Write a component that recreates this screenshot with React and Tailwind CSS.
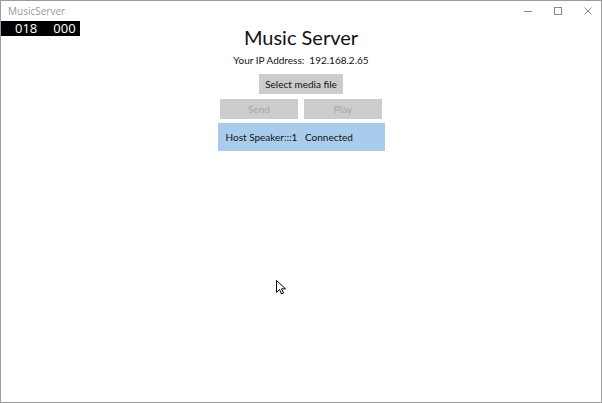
import React from 'react';

const font = { fontFamily: 'Lato, "Open Sans", "Liberation Sans", sans-serif' };

const TitleBar = () => (
  <div className="flex h-[20px] items-center justify-between">
    <span className="pl-[7px] text-[10px] text-[#9a9a9a]" style={{ fontFamily: '"Open Sans", sans-serif' }}>MusicServer</span>
    <div className="flex items-center gap-[22px] pr-[9px] text-[#8a8a8a]">
      <svg width="8" height="8" viewBox="0 0 8 8"><path d="M0 4.5h8" stroke="currentColor" strokeWidth="1" /></svg>
      <svg width="8" height="8" viewBox="0 0 8 8"><rect x="0.5" y="0.5" width="7" height="7" fill="none" stroke="currentColor" strokeWidth="1" /></svg>
      <svg width="8" height="8" viewBox="0 0 8 8"><path d="M0.5 0.5l7 7M7.5 0.5l-7 7" stroke="currentColor" strokeWidth="1" /></svg>
    </div>
  </div>
);

export default function App() {
  return (
    <div className="relative h-[403px] w-[602px] overflow-hidden border border-[#9c9c9c] bg-white" style={font}>
      <TitleBar />
      <div className="relative h-[381px]">
        <div
          className="absolute left-[-1px] top-0 flex h-[15px] w-[80px] items-center bg-black text-[13px] leading-none text-white"
          style={{ fontFamily: '"Open Sans", sans-serif' }}
        >
          <span className="ml-[15px]">018</span>
          <span className="ml-[16px]">000</span>
        </div>

        <div className="flex flex-col items-center pt-[3px]">
          <h1 className="text-[20px] leading-[27px] text-[#111]">Music Server</h1>
          <p className="mt-[2px] text-[10px] leading-[15px] text-[#111]">Your IP Address:&nbsp; 192.168.2.65</p>
          <button className="mt-[6px] h-[20px] w-[84px] bg-[#cccccc] text-[10px] text-[#111]">Select media file</button>
          <div className="mt-[5px] flex gap-[6px]">
            <button className="h-[20px] w-[78px] bg-[#cccccc] text-[10px] text-[#a8a8a8]">Send</button>
            <button className="h-[20px] w-[78px] bg-[#cccccc] text-[10px] text-[#a8a8a8]">Play</button>
          </div>
          <div className="mt-[4px] flex h-[28px] w-[167px] items-center bg-[#a9ccec] pl-[8px] text-[10px] text-[#111]">
            Host Speaker:::1&nbsp;&nbsp; Connected
          </div>
        </div>

        <svg className="absolute left-[275px] top-[259px]" width="10" height="15" viewBox="0 0 10 15">
          <path d="M0.5 0.5v12l3-3 2 4.5 2-1-2-4.2h4z" fill="white" stroke="black" strokeWidth="1" strokeLinejoin="round" />
        </svg>
      </div>
    </div>
  );
}
